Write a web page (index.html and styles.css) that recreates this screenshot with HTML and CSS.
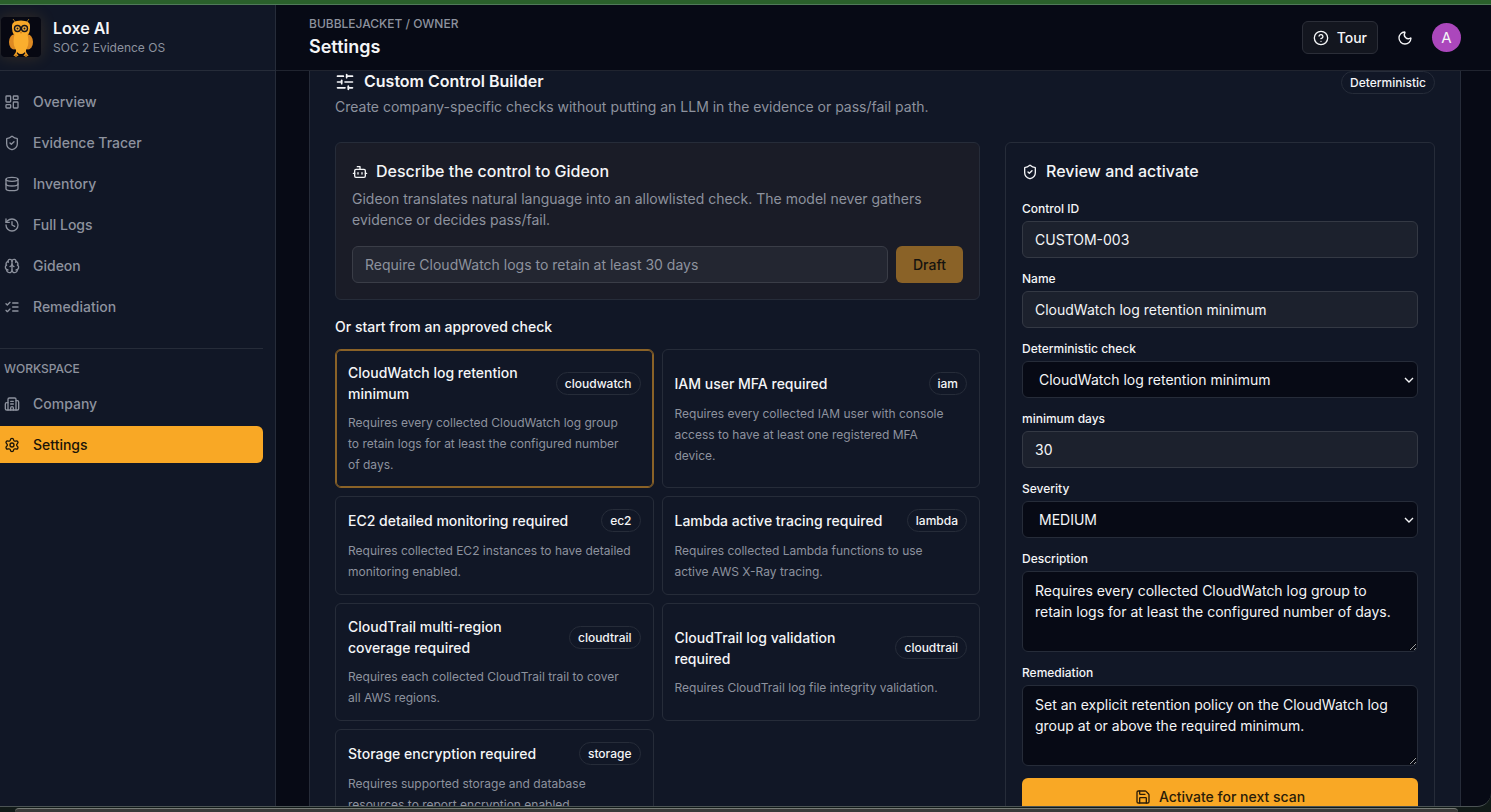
FILE: index.html
```html
<!DOCTYPE html>
<html lang="en">
<head>
  <meta charset="UTF-8" />
  <meta name="viewport" content="width=device-width, initial-scale=1" />
  <title>Settings - Loxe AI</title>
  <link rel="stylesheet" href="styles.css">
</head>
<body>

  <div class="top-strip"></div>

  <div class="app">
    <aside class="sidebar">
      <div class="brand">
        <svg class="logo" viewBox="0 0 40 40" aria-hidden="true">
          <rect width="40" height="40" rx="3" fill="#070812" />
          <path d="M12 2l3 4M28 2l-3 4" stroke="#9a742c" stroke-width="1" />
          <path d="M16 33l-1 4M24 33l1 4M15 36l-2 3M15 36v4M15 36l2 3M25 36l-2 3M25 36v4M25 36l2 3" stroke="#e8971f" stroke-width="1.300" fill="none" />
          <path d="M11 11q-1-6 5-7 4-1 8 0 6 1 5 7 0 4-2 7H13q-2-3-2-7z" fill="#f8a828" />
          <ellipse cx="13" cy="25" rx="5" ry="7.500" fill="#de8a22" />
          <ellipse cx="27" cy="25" rx="5" ry="7.500" fill="#de8a22" />
          <path d="M14 16h12q3 9 0 15-2 6-6 6t-6-6q-3-6 0-15z" fill="#fbae2e" />
          <circle cx="16.500" cy="11.500" r="3" fill="#f9b23c" stroke="#17151a" stroke-width="1.400" />
          <circle cx="23.500" cy="11.500" r="3" fill="#f9b23c" stroke="#17151a" stroke-width="1.400" />
          <circle cx="16.500" cy="11.500" r="1" fill="#17151a" />
          <circle cx="23.500" cy="11.500" r="1" fill="#17151a" />
          <path d="M19 15h2l-1 2z" fill="#c9771a" />
        </svg>
        <div>
          <div class="brand-name">Loxe AI</div>
          <div class="brand-sub">SOC 2 Evidence OS</div>
        </div>
      </div>

      <nav class="nav">
        <a href="#overview"><svg class="icon" viewBox="0 0 24 24"><rect width="7" height="9" x="3" y="3" rx="1"/><rect width="7" height="5" x="14" y="3" rx="1"/><rect width="7" height="9" x="14" y="12" rx="1"/><rect width="7" height="5" x="3" y="16" rx="1"/></svg>Overview</a>
        <a href="#tracer"><svg class="icon" viewBox="0 0 24 24"><path d="M20 13c0 5-3.500 7.500-7.660 8.950a1 1 0 0 1-.67-.01C7.500 20.500 4 18 4 13V6a1 1 0 0 1 1-1c2 0 4.500-1.200 6.240-2.720a1.170 1.170 0 0 1 1.520 0C14.510 3.810 17 5 19 5a1 1 0 0 1 1 1z"/><path d="m9 12 2 2 4-4"/></svg>Evidence Tracer</a>
        <a href="#inventory"><svg class="icon" viewBox="0 0 24 24"><ellipse cx="12" cy="5" rx="9" ry="3"/><path d="M3 5V19A9 3 0 0 0 21 19V5"/><path d="M3 12A9 3 0 0 0 21 12"/></svg>Inventory</a>
        <a href="#logs"><svg class="icon" viewBox="0 0 24 24"><path d="M3 12a9 9 0 1 0 9-9 9.750 9.750 0 0 0-6.740 2.740L3 8"/><path d="M3 3v5h5"/><path d="M12 7v5l4 2"/></svg>Full Logs</a>
        <a href="#gideon"><svg class="icon" viewBox="0 0 24 24"><path d="M12 18V5"/><path d="M15 13a4.170 4.170 0 0 1-3-4 4.170 4.170 0 0 1-3 4"/><path d="M17.598 6.500A3 3 0 1 0 12 5a3 3 0 1 0-5.598 1.500"/><path d="M17.997 5.125a4 4 0 0 1 2.526 5.770"/><path d="M18 18a4 4 0 0 0 2-7.464"/><path d="M19.967 17.483A4 4 0 1 1 12 18a4 4 0 1 1-7.967-.517"/><path d="M6 18a4 4 0 0 1-2-7.464"/><path d="M6.003 5.125a4 4 0 0 0-2.526 5.770"/></svg>Gideon</a>
        <a href="#remediation"><svg class="icon" viewBox="0 0 24 24"><path d="m3 17 2 2 4-4"/><path d="m3 7 2 2 4-4"/><path d="M13 6h8"/><path d="M13 12h8"/><path d="M13 18h8"/></svg>Remediation</a>

        <div class="nav-label">WORKSPACE</div>
        <a href="#company"><svg class="icon" viewBox="0 0 24 24"><path d="M10 12h4"/><path d="M10 8h4"/><path d="M14 21v-3a2 2 0 0 0-4 0v3"/><path d="M6 10H4a2 2 0 0 0-2 2v7a2 2 0 0 0 2 2h16a2 2 0 0 0 2-2V9a2 2 0 0 0-2-2h-2"/><path d="M6 21V5a2 2 0 0 1 2-2h8a2 2 0 0 1 2 2v16"/></svg>Company</a>
        <a href="#settings" class="active" aria-current="page"><svg class="icon" viewBox="0 0 24 24"><path d="M9.671 4.136a2.340 2.340 0 0 1 4.659 0 2.340 2.340 0 0 0 3.319 1.915 2.340 2.340 0 0 1 2.330 4.033 2.340 2.340 0 0 0 0 3.831 2.340 2.340 0 0 1-2.330 4.033 2.340 2.340 0 0 0-3.319 1.915 2.340 2.340 0 0 1-4.659 0 2.340 2.340 0 0 0-3.320-1.915 2.340 2.340 0 0 1-2.330-4.033 2.340 2.340 0 0 0 0-3.831A2.340 2.340 0 0 1 6.350 6.051a2.340 2.340 0 0 0 3.319-1.915"/><circle cx="12" cy="12" r="3"/></svg>Settings</a>
      </nav>
    </aside>

    <div class="main">
      <header class="topbar">
        <div>
          <div class="crumb">BUBBLEJACKET / OWNER</div>
          <h1>Settings</h1>
        </div>
        <div class="topbar-actions">
          <button type="button" class="btn-tour"><svg class="icon" viewBox="0 0 24 24"><circle cx="12" cy="12" r="10"/><path d="M9.090 9a3 3 0 0 1 5.830 1c0 2-3 3-3 3"/><path d="M12 17h.01"/></svg>Tour</button>
          <button type="button" class="btn-theme" aria-label="Toggle theme"><svg class="icon" viewBox="0 0 24 24"><path d="M20.985 12.486a9 9 0 1 1-9.473-9.472c.405-.022.617.46.402.803a6 6 0 0 0 8.268 8.268c.344-.215.825-.004.803.401"/></svg></button>
          <button type="button" class="avatar">A</button>
        </div>
      </header>

      <main class="content">
        <section class="panel">
          <div class="panel-head">
            <div>
              <h2><svg class="icon icon-lg" viewBox="0 0 24 24"><path d="M10 5H3"/><path d="M12 19H3"/><path d="M14 3v4"/><path d="M16 17v4"/><path d="M21 12h-9"/><path d="M21 19h-5"/><path d="M21 5h-7"/><path d="M8 10v4"/><path d="M8 12H3"/></svg>Custom Control Builder</h2>
              <p class="muted">Create company-specific checks without putting an LLM in the evidence or pass/fail path.</p>
            </div>
            <span class="badge">Deterministic</span>
          </div>

          <div class="columns">
            <div class="left">
              <form class="card describe">
                <h3><svg class="icon" viewBox="0 0 24 24"><path d="M12 8V4H8"/><rect width="16" height="12" x="4" y="8" rx="2"/><path d="M2 14h2"/><path d="M20 14h2"/><path d="M15 13v2"/><path d="M9 13v2"/></svg><label for="prompt">Describe the control to Gideon</label></h3>
                <p class="muted">Gideon translates natural language into an allowlisted check. The model never gathers evidence or decides pass/fail.</p>
                <div class="prompt-row">
                  <input type="text" id="prompt" class="field" placeholder="Require CloudWatch logs to retain at least 30 days">
                  <button type="button" class="btn-draft" disabled>Draft</button>
                </div>
              </form>

              <h4>Or start from an approved check</h4>
              <div class="checks">
                <button type="button" class="check selected">
                  <span class="check-head"><span>CloudWatch log retention minimum</span><span class="badge">cloudwatch</span></span>
                  <span class="check-text">Requires every collected CloudWatch log group to&nbsp;retain logs for at least the configured number of&nbsp;days.</span>
                </button>
                <button type="button" class="check">
                  <span class="check-head"><span>IAM user MFA required</span><span class="badge">iam</span></span>
                  <span class="check-text">Requires every collected IAM user with console access to have at least one registered MFA device.</span>
                </button>
                <button type="button" class="check">
                  <span class="check-head"><span>EC2 detailed monitoring required</span><span class="badge">ec2</span></span>
                  <span class="check-text">Requires collected EC2 instances to have detailed monitoring enabled.</span>
                </button>
                <button type="button" class="check">
                  <span class="check-head"><span>Lambda active tracing required</span><span class="badge">lambda</span></span>
                  <span class="check-text">Requires collected Lambda functions to use active&nbsp;AWS X-Ray tracing.</span>
                </button>
                <button type="button" class="check">
                  <span class="check-head"><span>CloudTrail multi-region coverage required</span><span class="badge">cloudtrail</span></span>
                  <span class="check-text">Requires each collected CloudTrail trail to cover all&nbsp;AWS regions.</span>
                </button>
                <button type="button" class="check">
                  <span class="check-head"><span>CloudTrail log validation required</span><span class="badge">cloudtrail</span></span>
                  <span class="check-text">Requires CloudTrail log file integrity validation.</span>
                </button>
                <button type="button" class="check">
                  <span class="check-head"><span>Storage encryption required</span><span class="badge">storage</span></span>
                  <span class="check-text">Requires supported storage and database resources to report encryption enabled.</span>
                </button>
              </div>
            </div>

            <form class="card review">
              <h3><svg class="icon" viewBox="0 0 24 24"><path d="M20 13c0 5-3.500 7.500-7.660 8.950a1 1 0 0 1-.67-.01C7.500 20.500 4 18 4 13V6a1 1 0 0 1 1-1c2 0 4.500-1.200 6.240-2.720a1.170 1.170 0 0 1 1.520 0C14.510 3.810 17 5 19 5a1 1 0 0 1 1 1z"/><path d="m9 12 2 2 4-4"/></svg>Review and activate</h3>

              <label for="control_id">Control ID</label>
              <input type="text" id="control_id" class="field" value="CUSTOM-003">

              <label for="name">Name</label>
              <input type="text" id="name" class="field" value="CloudWatch log retention minimum">

              <label for="check">Deterministic check</label>
              <select id="check" class="field dark">
                <option>CloudWatch log retention minimum</option>
                <option>IAM user MFA required</option>
                <option>EC2 detailed monitoring required</option>
              </select>

              <label for="days">minimum days</label>
              <input type="text" inputmode="numeric" id="days" class="field" value="30">

              <label for="severity">Severity</label>
              <select id="severity" class="field dark">
                <option>LOW</option>
                <option selected>MEDIUM</option>
                <option>HIGH</option>
              </select>

              <label for="description">Description</label>
              <textarea id="description" class="field dark">Requires every collected CloudWatch log group to retain logs for at least the configured number of days.</textarea>

              <label for="fix">Remediation</label>
              <textarea id="fix" class="field dark">Set an explicit retention policy on the CloudWatch log group at or above the required minimum.</textarea>

              <button type="button" class="btn-activate"><svg class="icon" viewBox="0 0 24 24"><path d="M15.200 3a2 2 0 0 1 1.400.6l3.800 3.800a2 2 0 0 1 .6 1.400V19a2 2 0 0 1-2 2H5a2 2 0 0 1-2-2V5a2 2 0 0 1 2-2z"/><path d="M17 21v-7a1 1 0 0 0-1-1H8a1 1 0 0 0-1 1v7"/><path d="M7 3v4a1 1 0 0 0 1 1h7"/></svg>Activate for next scan</button>
            </form>
          </div>
        </section>
      </main>
    </div>
  </div>

  <div class="bottom-strip"></div>

</body>
</html>
```

FILE: styles.css
```css
* {
  margin: 0;
  padding: 0;
  box-sizing: border-box;
}

html {
  color-scheme: dark;
}

body {
  display: flex;
  flex-direction: column;
  height: 100vh;
  overflow: hidden;
  background-color: #111a18;
  color: #f4f5f7;
  font-family: Inter, "Liberation Sans", sans-serif;
  font-size: 14px;
  line-height: 21px;
}

button, input, select, textarea {
  font: inherit;
  color: inherit;
}

button {
  cursor: pointer;
}

.top-strip {
  flex: none;
  height: 5px;
  background-color: #2a602b;
  border-bottom: 1px solid #4f7a59;
}

.bottom-strip {
  flex: none;
  height: 4px;
  margin: 0 33px 0 15px;
  background-color: #3a3a39;
  border-top: 1px solid #767b76;
  border-radius: 8px 8px 0 0;
}

.app {
  flex: 1;
  min-height: 0;
  display: flex;
  overflow: hidden;
  background-color: #070a15;
  border-bottom: 1px solid #4b5354;
  border-radius: 0 0 14px 0;
  margin-bottom: 1px;
}

.icon {
  flex: none;
  width: 16px;
  height: 16px;
  fill: none;
  stroke: currentColor;
  stroke-width: 2;
  stroke-linecap: round;
  stroke-linejoin: round;
}

.icon-lg {
  width: 20px;
  height: 20px;
}

/* sidebar */
.sidebar {
  flex: none;
  width: 276px;
  background-color: #111726;
  border-right: 1px solid #262c39;
}

.brand {
  display: flex;
  align-items: center;
  gap: 12px;
  height: 66px;
  padding: 0 0 1px 1px;
  border-bottom: 1px solid #262c39;
}

.logo {
  width: 40px;
  height: 40px;
  border-radius: 4px;
  box-shadow: 0 0 16px rgba(249, 168, 38, 0.16);
}

.brand-name {
  font-size: 16px;
  font-weight: 600;
}

.brand-sub {
  font-size: 12px;
  line-height: 18px;
  color: #8d929e;
}

.nav {
  display: flex;
  flex-direction: column;
  gap: 4px;
  padding: 12px 12px 0 0;
}

.nav a {
  display: flex;
  align-items: center;
  gap: 13px;
  height: 37px;
  padding-left: 4px;
  border-radius: 0 6px 6px 0;
  color: #8d929e;
  font-weight: 500;
  text-decoration: none;
}

.nav a.active {
  background-color: #f9a825;
  color: #1b1408;
}

.nav-label {
  margin-top: 19px;
  padding: 11px 4px 4px;
  border-top: 1px solid #262c39;
  font-size: 12px;
  line-height: 17px;
  font-weight: 500;
  color: #8d929e;
}

/* header */
.main {
  flex: 1;
  min-width: 0;
  display: flex;
  flex-direction: column;
}

.topbar {
  flex: none;
  display: flex;
  align-items: center;
  justify-content: space-between;
  height: 66px;
  padding: 0 30px 0 33px;
  border-bottom: 1px solid #20242f;
}

.crumb {
  font-size: 12px;
  line-height: 18px;
  font-weight: 500;
  color: #8d929e;
}

h1 {
  font-size: 18px;
  line-height: 28px;
  font-weight: 600;
}

.topbar-actions {
  display: flex;
  align-items: center;
  gap: 8px;
}

.btn-tour {
  display: flex;
  align-items: center;
  gap: 8px;
  height: 33px;
  padding: 0 10px;
  background-color: #13161f;
  border: 1px solid #2b2e38;
  border-radius: 6px;
  font-weight: 500;
}

.btn-theme {
  display: grid;
  place-items: center;
  width: 38px;
  height: 33px;
  background: none;
  border: none;
}

.avatar {
  width: 29px;
  height: 29px;
  border: none;
  border-radius: 50%;
  background-color: #ab47bc;
  font-size: 15px;
}

/* custom control builder */
.content {
  flex: 1;
  min-height: 0;
  overflow: hidden;
  padding: 0 30px 0 33px;
}

.panel {
  padding: 0 25px 25px;
  background-color: #111726;
  border: 1px solid #262c39;
  border-top: none;
}

.panel-head {
  display: flex;
  align-items: flex-start;
  justify-content: space-between;
  margin-bottom: 25px;
}

h2 {
  display: flex;
  align-items: center;
  gap: 9px;
  font-size: 16px;
  line-height: 21px;
  font-weight: 600;
}

.panel-head p {
  margin-top: 4px;
}

.muted {
  color: #8d929e;
}

.badge {
  flex: none;
  padding: 2px 8px;
  border: 1px solid #262c39;
  border-radius: 12px;
  font-size: 12px;
  line-height: 17px;
  font-weight: 500;
}

.columns {
  display: grid;
  grid-template-columns: minmax(0, 3fr) minmax(0, 2fr);
  gap: 25px;
}

.card {
  padding: 16px;
  border: 1px solid #262c39;
  border-radius: 6px;
}

.describe {
  background-color: #1a1c27;
}

h3 {
  display: flex;
  align-items: center;
  gap: 8px;
  font-size: 16px;
  line-height: 25px;
  font-weight: 500;
}

.describe p {
  margin: 4px 0 16px;
}

.prompt-row {
  display: flex;
  gap: 8px;
}

.field {
  display: block;
  width: 100%;
  height: 37px;
  padding: 0 12px;
  background-color: #1c212d;
  border: 1px solid #343944;
  border-radius: 6px;
}

.field::placeholder {
  color: #8d929e;
}

.field.dark {
  background-color: #070a15;
  border-color: #262c39;
}

select.field {
  appearance: none;
  padding: 0 16px;
  background-image: url("data:image/svg+xml,%3Csvg xmlns='http://www.w3.org/2000/svg' width='10' height='6'%3E%3Cpath d='M1 1l4 4 4-4' fill='none' stroke='%23f4f5f7' stroke-width='1.400'/%3E%3C/svg%3E");
  background-repeat: no-repeat;
  background-position: right 3px center;
}

.describe .field {
  background-color: #232631;
  border-color: #3a3d47;
}

.btn-draft {
  flex: none;
  width: 67px;
  border: none;
  border-radius: 6px;
  background-color: #8a6227;
  color: #15130f;
  font-weight: 500;
}

h4 {
  margin: 16px 0 12px;
  font-size: 14px;
  font-weight: 500;
}

.checks {
  display: grid;
  grid-template-columns: 1fr 1fr;
  gap: 8px;
}

.check {
  display: flex;
  flex-direction: column;
  justify-content: center;
  gap: 8px;
  padding: 12px;
  background: none;
  border: 1px solid #262c39;
  border-radius: 6px;
  text-align: left;
}

.check.selected {
  border-color: #8a6227;
  box-shadow: 0 0 0 1px #8a6227 inset;
}

.check-head {
  display: flex;
  align-items: center;
  justify-content: space-between;
  gap: 8px;
  font-weight: 500;
}

.check-text {
  padding-right: 8px;
  font-size: 12px;
  color: #8d929e;
}

.review label {
  display: block;
  margin: 12px 0 4px;
  font-size: 12px;
  line-height: 17px;
  font-weight: 500;
}

.review h3 + label {
  margin-top: 16px;
}

textarea.field {
  height: 81px;
  padding: 8px 12px;
  resize: vertical;
}

.btn-activate {
  display: flex;
  align-items: center;
  justify-content: center;
  gap: 8px;
  width: 100%;
  height: 37px;
  margin-top: 12px;
  border: none;
  border-radius: 6px;
  background-color: #f9a825;
  color: #2a1c08;
  font-weight: 500;
}
```
